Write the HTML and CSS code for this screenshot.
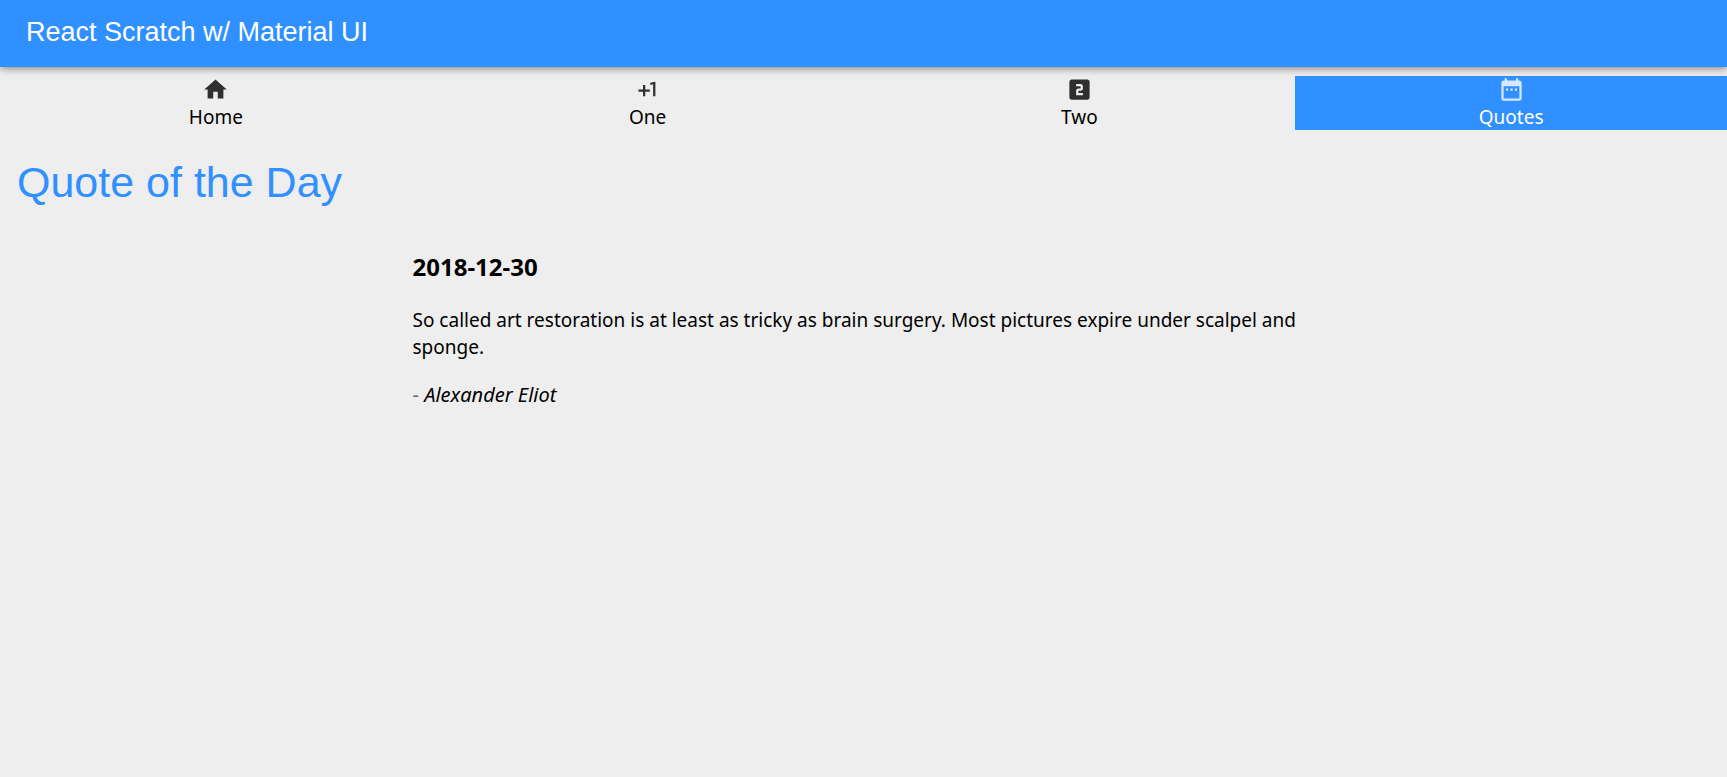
FILE: index.html
```html
<!DOCTYPE html>
<html lang="en">
<head>
<meta charset="utf-8">
<title>React Scratch w/ Material UI</title>
<meta name="viewport" content="width=device-width, initial-scale=1">
<link rel="stylesheet" href="styles.css">
</head>
<body>
<header class="app-bar">React Scratch w/ Material UI</header>
<nav class="tabs">
  <a class="tab" href="#home">
    <svg class="tab-icon" viewBox="0 0 24 24" aria-hidden="true"><path d="M10 20v-6h4v6h5v-8h3L12 3 2 12h3v8z"/></svg>
    <span>Home</span>
  </a>
  <a class="tab" href="#one">
    <svg class="tab-icon" viewBox="0 0 24 24" aria-hidden="true"><path d="M10 8H8v4H4v2h4v4h2v-4h4v-2h-4zm4.500-1.920V7.900l2.500-.5V18h2V5z"/></svg>
    <span>One</span>
  </a>
  <a class="tab" href="#two">
    <svg class="tab-icon" viewBox="0 0 24 24" aria-hidden="true"><path d="M19 3H5c-1.100 0-2 .9-2 2v14c0 1.100.9 2 2 2h14c1.100 0 2-.9 2-2V5c0-1.100-.9-2-2-2zm-4 8c0 1.110-.9 2-2 2h-2v2h4v2H9v-4c0-1.110.9-2 2-2h2V9H9V7h4c1.100 0 2 .89 2 2v2z"/></svg>
    <span>Two</span>
  </a>
  <a class="tab tab-active" href="#quotes" aria-current="page">
    <svg class="tab-icon" viewBox="0 0 24 24" aria-hidden="true"><path d="M9 11H7v2h2v-2zm4 0h-2v2h2v-2zm4 0h-2v2h2v-2zm2-7h-1V2h-2v2H8V2H6v2H5c-1.110 0-1.990.9-1.990 2L3 20c0 1.100.89 2 2 2h14c1.100 0 2-.9 2-2V6c0-1.100-.9-2-2-2zm0 16H5V9h14v11z"/></svg>
    <span>Quotes</span>
  </a>
</nav>
<main class="page">
  <h1 class="page-title">Quote of the Day</h1>
  <article class="quote">
    <h2 class="quote-date">2018-12-30</h2>
    <p class="quote-text">So called art restoration is at least as tricky as brain surgery. Most pictures expire under scalpel and sponge.</p>
    <p class="quote-author"><span class="dash">-</span> <em>Alexander Eliot</em></p>
  </article>
</main>
</body>
</html>
```
FILE: styles.css
```css
body {
  margin: 0;
  background: #eee;
  color: #000;
  font-family: "Noto Sans", "Open Sans", sans-serif;
  font-size: 19px;
  line-height: 27px;
}

.app-bar {
  padding: 16px 26px 19px;
  background: #3090ff;
  color: #fff;
  font-family: "Liberation Sans", Arial, sans-serif;
  font-size: 27px;
  line-height: 32px;
  box-shadow: 0 1px 8px rgba(0, 0, 0, 0.5);
}

.tabs {
  display: grid;
  grid-template-columns: repeat(4, 1fr);
  margin-top: 9px;
}

.tab {
  display: flex;
  flex-direction: column;
  align-items: center;
  gap: 2px;
  color: inherit;
  line-height: 25px;
  text-decoration: none;
}

.tab-active {
  background: #3090ff;
  color: #fff;
}

.tab-icon {
  width: 27px;
  height: 27px;
  fill: currentColor;
  opacity: 0.8;
}

.page {
  padding: 27px 17px;
}

.page-title {
  margin: 0;
  color: #3090ff;
  font-family: "Liberation Sans", Arial, sans-serif;
  font-size: 43px;
  font-weight: 400;
  line-height: 50px;
}

.quote {
  max-width: 902px;
  margin: 46px auto 0;
}

.quote-date {
  margin: 0 0 26px;
  font-size: 24px;
  line-height: 28px;
}

.quote-text {
  margin: 0 0 20px;
}

.quote-author {
  margin: 0;
  font-size: 20px;
}

.dash {
  color: #666;
}
```
